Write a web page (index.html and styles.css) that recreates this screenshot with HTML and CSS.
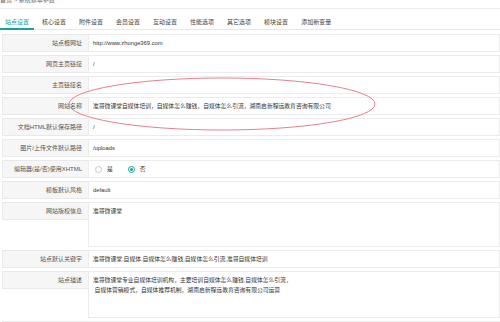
FILE: index.html
```html
<!DOCTYPE html>
<html lang="zh-CN">
<head>
<meta charset="utf-8">
<title>系统基本参数</title>
<link rel="stylesheet" href="styles.css">
</head>
<body>
<div class="page">
  <div class="crumb"><span class="crumb-text">首页 &gt; 系统基本参数</span></div>
  <div class="tabs">
    <div class="tab active">站点设置</div>
    <div class="tab">核心设置</div>
    <div class="tab">附件设置</div>
    <div class="tab">会员设置</div>
    <div class="tab">互动设置</div>
    <div class="tab">性能选项</div>
    <div class="tab">其它选项</div>
    <div class="tab">模块设置</div>
    <div class="tab">添加新变量</div>
  </div>
  <div class="form">
    <div class="row"><div class="label">站点根网址</div><div class="value">http://www.zhunge369.com</div></div>
    <div class="row"><div class="label">网页主页链接</div><div class="value">/</div></div>
    <div class="row"><div class="label">主页链接名</div><div class="value"></div></div>
    <div class="row"><div class="label">网站名称</div><div class="value">准哥微课堂自媒体培训，自媒体怎么赚钱，自媒体怎么引流，湖南启新程远教育咨询有限公司</div></div>
    <div class="row"><div class="label">文档HTML默认保存路径</div><div class="value">/</div></div>
    <div class="row"><div class="label">图片/上传文件默认路径</div><div class="value">/uploads</div></div>
    <div class="row"><div class="label">编辑器(是/否)使用XHTML</div><div class="value radios">
      <span class="radio"></span><span class="rtext">是</span>
      <span class="radio checked"></span><span class="rtext">否</span>
    </div></div>
    <div class="row"><div class="label">模板默认风格</div><div class="value">default</div></div>
    <div class="row tall"><div class="label">网站版权信息</div><div class="value area">准哥微课堂</div></div>
    <div class="row"><div class="label">站点默认关键字</div><div class="value">准哥微课堂,自媒体,自媒体怎么赚钱,自媒体怎么引流,准哥自媒体培训</div></div>
    <div class="row tall"><div class="label">站点描述</div><div class="value area area2">准哥微课堂专业自媒体培训机构，主要培训自媒体怎么赚钱,自媒体怎么引流，<br>&nbsp;自媒体营销模式，自媒体推荐机制，湖南启新程远教育咨询有限公司运营</div></div>
    <div class="row"><div class="label"></div><div class="value"></div></div>
  </div>
  <svg class="mark" width="500" height="322" viewBox="0 0 500 322">
    <ellipse cx="222" cy="104" rx="153" ry="26" fill="none" stroke="#e8808f" stroke-width="1"/>
  </svg>
</div>
</body>
</html>
```

FILE: styles.css
```css
html, body {
  margin: 0;
  padding: 0;
  background: #ffffff;
}
.page {
  position: relative;
  width: 500px;
  height: 322px;
  overflow: hidden;
  font-family: "Liberation Sans", "Noto Sans CJK SC", sans-serif;
  font-size: 6px;
  color: #333;
}
.crumb {
  height: 8px;
  border-bottom: 1px solid #ececec;
  overflow: hidden;
}
.crumb-text {
  display: block;
  margin-top: -3px;
  line-height: 6px;
  color: #666;
}
.tabs {
  display: flex;
  height: 20px;
  border-bottom: 1px solid #e6e6e6;
}
.tab {
  padding: 10px 5px 3px;
  margin-right: 3px;
  line-height: 6px;
  height: 6px;
  border-bottom: 2px solid transparent;
  color: #444;
  white-space: nowrap;
}
.tab.active {
  color: #1aa094;
  border-bottom-color: #1aa094;
}
.form {
  display: flex;
  flex-direction: column;
  gap: 3px;
  padding-left: 2px;
  margin-top: 4px;
}
.row {
  display: flex;
  height: 18px;
  align-items: flex-start;
}
.row.tall {
  height: auto;
}
.label {
  box-sizing: border-box;
  width: 86px;
  height: 18px;
  flex: none;
  background: #f6f6f6;
  border: 1px solid #e9e9e9;
  border-right: none;
  text-align: right;
  padding-right: 6px;
  line-height: 16px;
  color: #555;
  white-space: nowrap;
}
.value {
  box-sizing: border-box;
  flex: 1;
  height: 18px;
  border: 1px solid #ececec;
  padding-left: 4px;
  line-height: 16px;
  font-size: 5.8px;
  white-space: nowrap;
  color: #333;
}
.value.area {
  height: 45px;
  line-height: 10px;
  padding-top: 3px;
  white-space: normal;
}
.value.area2 {
  height: 47px;
}
.radios {
  display: flex;
  align-items: center;
  padding-left: 6px;
}
.radio {
  box-sizing: border-box;
  width: 7px;
  height: 7px;
  border: 1px solid #c9c9c9;
  border-radius: 50%;
  margin-right: 5px;
  position: relative;
}
.radio.checked {
  border-color: #1aa094;
}
.radio.checked::after {
  content: "";
  position: absolute;
  left: 1px;
  top: 1px;
  width: 3px;
  height: 3px;
  border-radius: 50%;
  background: #1aa094;
}
.rtext {
  margin-right: 15px;
}
.mark {
  position: absolute;
  left: 0;
  top: 0;
  pointer-events: none;
}
```
